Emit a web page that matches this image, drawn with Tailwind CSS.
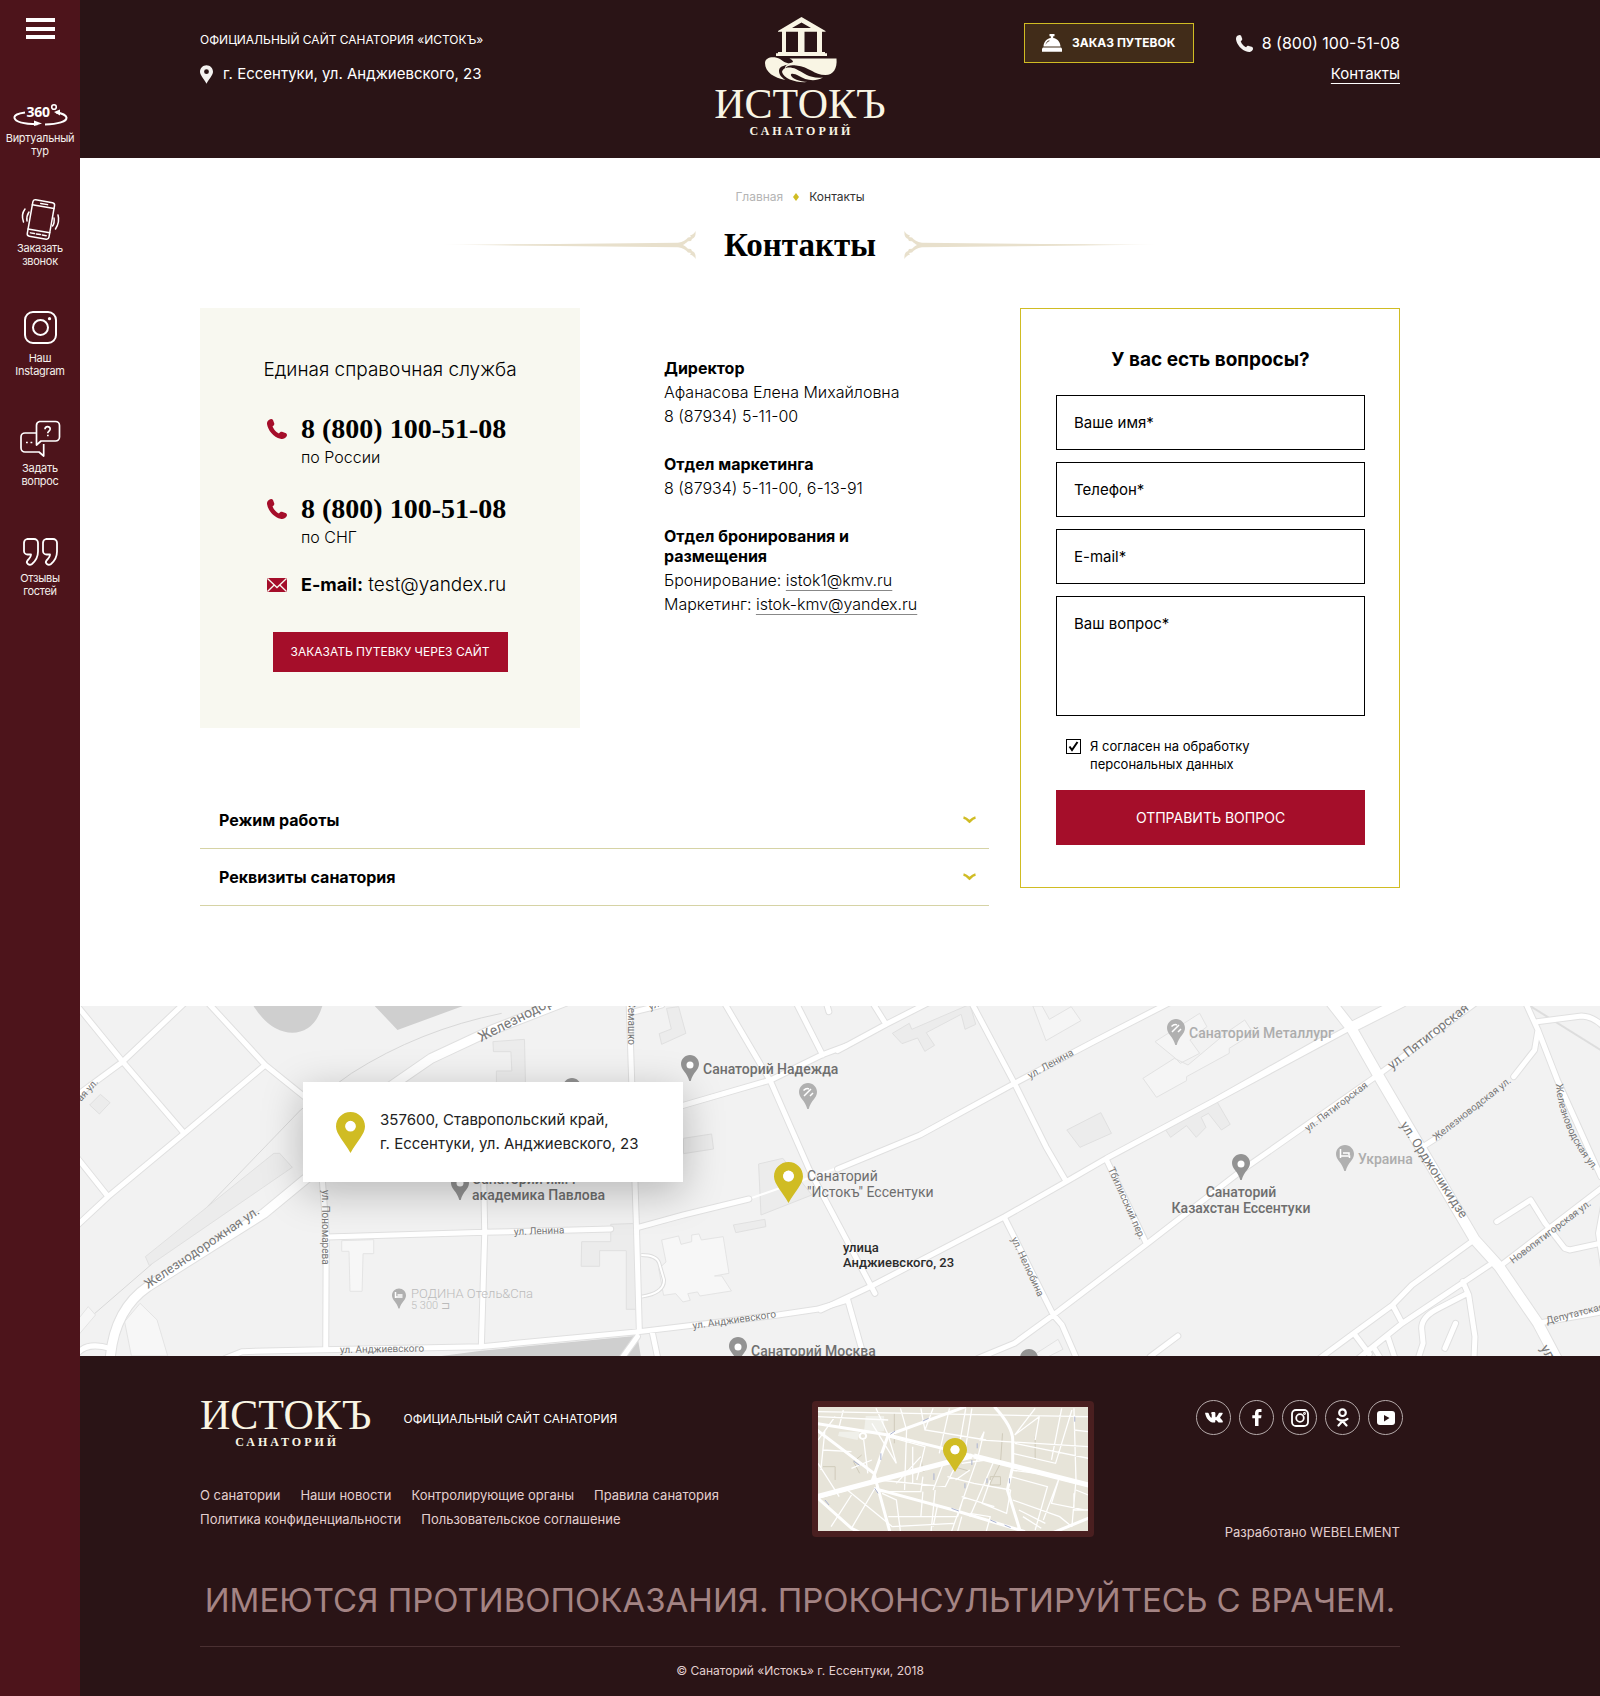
<!DOCTYPE html>
<html lang="ru">
<head>
<meta charset="utf-8">
<meta name="viewport" content="width=device-width, initial-scale=1">
<title>Контакты — Санаторий «Истокъ»</title>
<script src="https://cdn.jsdelivr.net/npm/@tailwindcss/browser@4"></script>
</head>
<body class="bg-white font-['Inter','Liberation_Sans',sans-serif] text-black">
<svg class="absolute size-0" aria-hidden="true">
  <defs>
    <symbol id="pin" viewBox="0 0 29 41"><path fill="currentColor" fill-rule="evenodd" d="M14.5 0C6.5 0 0 6.4 0 14.4 0 22 8 29 14.5 41 21 29 29 22 29 14.4 29 6.4 22.5 0 14.500 0zm0 8.800a5.400 5.400 0 1 1 0 10.800 5.400 5.400 0 0 1 0-10.800z"/></symbol>
    <symbol id="phone" viewBox="0 0 20 20"><path fill="currentColor" d="M2.200.7C3.600-.2 5.300-.2 6 1l1.200 3.200c.4 1.200-.2 2-1.500 2.900C5.400 8.500 8.500 13 11.900 14.400c1.200-1.600 2.100-1.900 3.100-1.600l3.400 1.100c1.700.6 2 2.400 1.100 3.700-1.300 2.100-3.600 2.700-6 2.200C6.400 18.200.8 11 0 5 -.1 3.200.6 1.600 2.200.7z"/></symbol>
    <symbol id="mappin" viewBox="0 0 18 26"><path fill="currentColor" d="M9 0C4 0 0 4 0 9c0 6 6 8 8.300 17h1.400C12 17 18 15 18 9c0-5-4-9-9-9z"/></symbol>
    <symbol id="chevron" viewBox="0 0 13 8"><path d="M.5 1.500C3 2 5 4 6.500 5.500 8 4 10 2 12.500 1.500" fill="none" stroke="currentColor" stroke-width="2.600"/></symbol>
    <linearGradient id="fade" gradientUnits="userSpaceOnUse" x1="0" y1="0" x2="258" y2="0"><stop offset="0" stop-color="#e8e0cc" stop-opacity="0"/><stop offset=".3" stop-color="#e8e0cc"/></linearGradient>
    <symbol id="flourish" viewBox="0 0 258 28"><path fill="url(#fade)" d="M0 13.600 120 13 240 11.800C245 11 248 9 250 6.500l3-.5-1-1.500C255 3.500 256.500 2 257.500 0 258 4 257 7 254 8l-1 2-3 .3C248 12 247 13 245 14c2 1 3 2 5 3.700l3 .3 1 2c3 1 4 4 3.500 8-1-2-2.500-3.500-5.500-4.500l1-1.500-3-.5C248 19 245 17 240 16.200L120 15z"/></symbol>
  </defs>
</svg>

<div class="flex min-h-screen">
  <aside class="flex w-20 shrink-0 flex-col items-center bg-[#4d141b] pt-[18px] text-[#f4f0ec]">
    <button type="button" aria-label="Меню" class="flex h-[21px] w-[29px] flex-col justify-between">
      <span class="h-1 w-full bg-white"></span><span class="h-1 w-full bg-white"></span><span class="h-1 w-full bg-white"></span>
    </button>
    <nav class="mt-[45px] flex flex-col text-center text-[11px] leading-[13px] tracking-tight">
      <a href="#" class="flex h-[110px] flex-col items-center">
        <svg class="h-12 w-20" viewBox="0 0 80 48" fill="none" stroke="#fff" stroke-width="2">
          <text x="26.500" y="33" font-family="Open Sans, sans-serif" font-size="14" font-weight="700" fill="#fff" stroke="none">360</text>
          <circle cx="54" cy="23" r="2.300" stroke-width="1.600"/>
          <path d="M25 28.500C18 29.500 14 31 14.500 34c1 4 11 6 23 6.200M45 40.500c13-.3 22-3 21.500-7C66 31 61 29 56 28.500"/>
          <path d="m34 36.500 8 3-8 2.500zM60 25.500l-6 2.500 6 3.500z" fill="#fff" stroke="none"/>
        </svg>
        <span>Виртуальный<br>тур</span>
      </a>
      <a href="#" class="flex h-[110px] flex-col items-center">
        <svg class="h-12 w-20" viewBox="0 0 80 48" fill="none" stroke="#fff" stroke-width="1.500" stroke-linecap="round">
          <g transform="rotate(10 41 25)"><rect x="30" y="7" width="22" height="37" rx="2.500"/><path d="M30 12.500h22M30 37h22M38 9.700h7M33 40.500h4M39 40.500h4M45 40.500h4"/></g>
          <path d="M25 15c-3 4-3 9-1.500 13M29 18c-2 3-2.500 6-2 9M58 21c1.500 5 0 10-2.500 14M54 24c.5 3 0 6-1.500 8"/>
        </svg>
        <span>Заказать<br>звонок</span>
      </a>
      <a href="#" class="flex h-[110px] flex-col items-center">
        <svg class="h-12 w-20" viewBox="0 0 80 48" fill="none" stroke="#fff" stroke-width="2">
          <rect x="25" y="8" width="31" height="31" rx="8"/><circle cx="40.500" cy="23.500" r="7.500"/><circle cx="49.500" cy="14.700" r="1.600" fill="#fff" stroke="none"/>
        </svg>
        <span>Наш<br>Instagram</span>
      </a>
      <a href="#" class="flex h-[110px] flex-col items-center">
        <svg class="h-12 w-20" viewBox="0 0 80 48" fill="none" stroke="#fff" stroke-width="1.700" stroke-linejoin="round">
          <path d="M39.500 7.500h16a4 4 0 0 1 4 4v11.500a4 4 0 0 1-4 4H41l-4.500 4V11.500a4 4 0 0 1 3-4zM36.500 19H25a4 4 0 0 0-4 4v11a4 4 0 0 0 4 4h14l4.700 4V30"/>
          <path d="M45 15.300c0-3.500 5.200-3.500 5.200-.2 0 2-2.500 2-2.500 4.200"/><path d="M47 21.500h1.700M26 28.500h1.800M30.500 28.500h1.800"/>
        </svg>
        <span>Задать<br>вопрос</span>
      </a>
      <a href="#" class="flex h-[110px] flex-col items-center">
        <svg class="h-12 w-20" viewBox="0 0 80 48" fill="none" stroke="#fff" stroke-width="1.800" stroke-linejoin="round">
          <path d="M27 15h7a4 4 0 0 1 4 4v8.500c0 6-2.500 9.500-6 12.500-3 2-6.500-1-4.500-3.500 2-2 3.500-4 3.500-6h-3.500a3.500 3.500 0 0 1-3.500-3.500v-8a4 4 0 0 1 3-4z"/>
          <path d="M46 15h7a4 4 0 0 1 4 4v8.500c0 6-2.500 9.500-6 12.500-3 2-6.500-1-4.500-3.500 2-2 3.500-4 3.500-6h-3.500a3.500 3.500 0 0 1-3.500-3.500v-8a4 4 0 0 1 3-4z"/>
        </svg>
        <span>Отзывы<br>гостей</span>
      </a>
    </nav>
  </aside>

  <div class="flex min-w-0 flex-1 flex-col">
    <header class="bg-[#2a1416] pr-20 text-white">
      <div class="mx-auto grid h-[158px] max-w-[1200px] grid-cols-[1fr_auto_1fr]">
        <div class="flex flex-col gap-[14px] pt-8">
          <p class="text-xs leading-4">ОФИЦИАЛЬНЫЙ САЙТ САНАТОРИЯ «ИСТОКЪ»</p>
          <p class="flex items-center gap-[10px] text-[15px] leading-6 text-white"><svg class="h-[19px] w-[13px] text-[#f4f2f0]"><use href="#pin"/></svg>г. Ессентуки, ул. Анджиевского, 23</p>
        </div>
        <a href="#" class="flex flex-col items-center pt-4 font-['Liberation_Serif',serif] text-[#f9f5e4]">
          <svg class="h-[68px] w-20" viewBox="0 0 80 68" fill="currentColor" aria-hidden="true">
            <path fill-rule="evenodd" d="M41.500 1 18 15v.8h4V36h-4v1.300h-2V40h51v-2.700h-2V36h-3V15.800h3.500V15zm0 5.500L51 12H32zM26 15.800h12V36H26zm18.500 0H57V36H44.500z"/>
            <path d="M5 47C5 41 14 39.500 20 43c3 2 5 4.500 11 4.500-5 2-11.500 2-12 7 0 4 2 6.500 6.500 9.500C14 62 5 56 5 47z"/>
            <path d="M29.500 42.500h47C77.500 53 73 59 65.500 59 54 59 50 51 36 49.500c-6-.7-9 .5-11 3C25 49 28 48 33 46c0-1.500-1.500-2.500-3.500-3.500z"/>
            <path d="M22 56c1-5 8-5.500 14-3 8 4 14 10 27 8.500-9 5-18 2-24-1.500-5-3-9-3-8-.5 1 3 8 6 17 6.500-12 1-24-3-26-10z"/>
          </svg>
          <span class="mt-1 text-[42px] leading-8">ИСТОКЪ</span>
          <span class="mt-[5px] pl-[3px] text-xs leading-3 font-bold tracking-[3px]">САНАТОРИЙ</span>
        </a>
        <div class="flex items-start justify-end gap-[42px]">
          <a href="#" class="mt-[23px] flex h-10 w-[170px] items-center justify-center gap-[10px] border border-[#d0bc23] bg-[#412c19] text-xs font-bold">
            <svg class="h-[18px] w-5" viewBox="0 0 20 18" fill="#fff" aria-hidden="true"><path fill-rule="evenodd" d="M7.500 0h5v2.200h-1.300V4c4.300.5 7 4 7.300 8.500H1.500C1.800 8 4.500 4.500 8.800 4V2.200H7.500zM7.200 6.200C5 7 3.700 9 3.600 11c.6-1.600 1.600-3.200 4-4z"/><path d="M1 13.500h18l1 1v3.300H0v-3.300z"/></svg>
            ЗАКАЗ ПУТЕВОК
          </a>
          <div class="flex flex-col items-end gap-[7px] pt-[31px]">
            <a href="#" class="flex items-center gap-[9px] text-base leading-6"><svg class="size-[17px] text-[#f4f2f0]"><use href="#phone"/></svg>8 (800) 100-51-08</a>
            <a href="#" class="text-[15px] leading-6 underline underline-offset-4">Контакты</a>
          </div>
        </div>
      </div>
    </header>

    <main class="pt-[31px]">
      <div class="pr-20">
        <nav class="flex items-center justify-center gap-[10px] text-xs leading-4">
          <a href="#" class="text-[#b4b4b4]">Главная</a>
          <svg class="h-2 w-[6px]" viewBox="0 0 6 8"><path fill="#d0bc23" d="m3 0 3 4-3 4-3-4z"/></svg>
          <span class="text-[#333]">Контакты</span>
        </nav>
        <div class="mt-5 flex items-center justify-center gap-7">
          <svg class="h-7 w-[258px]"><use href="#flourish"/></svg>
          <h1 class="font-['Liberation_Serif',serif] text-[33px] leading-10 font-bold">Контакты</h1>
          <svg class="h-7 w-[258px] -scale-x-100"><use href="#flourish"/></svg>
        </div>

        <div class="mx-auto mt-[43px] grid max-w-[1200px] grid-cols-[1fr_380px] items-start gap-[31px]">
          <div>
            <div class="flex gap-[84px]">
              <section class="h-[420px] w-[380px] shrink-0 bg-[#f8f8f0] pt-[50px]">
                <h2 class="text-center text-[19px] leading-6 font-light">Единая справочная служба</h2>
                <div class="mt-[31px] flex flex-col gap-6 pl-[67px]">
                  <div class="flex gap-[14px]"><svg class="mt-[6px] size-5 text-[#a50e2a]"><use href="#phone"/></svg>
                    <div><a href="#" class="block font-['Liberation_Serif',serif] text-[28px] leading-8 font-bold">8 (800) 100-51-08</a><p class="text-[16px] leading-6 font-light">по России</p></div></div>
                  <div class="flex gap-[14px]"><svg class="mt-[6px] size-5 text-[#a50e2a]"><use href="#phone"/></svg>
                    <div><a href="#" class="block font-['Liberation_Serif',serif] text-[28px] leading-8 font-bold">8 (800) 100-51-08</a><p class="text-[16px] leading-6 font-light">по СНГ</p></div></div>
                  <div class="flex items-center gap-[14px]"><svg class="h-[14px] w-5" viewBox="0 0 20 14"><rect width="20" height="14" rx="1" fill="#a50e2a"/><path d="M.5.500 10 9.500 19.500.5M.5 13.500 7.200 7M19.500 13.500 12.800 7" fill="none" stroke="#f8f8f0" stroke-width="1.300"/></svg>
                    <p class="text-[19px] leading-6 font-light"><b class="text-[18px] font-bold">E-mail:</b> test@yandex.ru</p></div>
                </div>
                <button type="button" class="mx-auto mt-[35px] block h-10 w-[235px] bg-[#a50e2a] text-xs text-white">ЗАКАЗАТЬ ПУТЕВКУ ЧЕРЕЗ САЙТ</button>
              </section>
              <section class="flex flex-col gap-[26px] pt-[50px] text-[16px] leading-6 font-light">
                <div><h3 class="mb-[2px] leading-5 font-bold">Директор</h3><p>Афанасова Елена Михайловна</p><p>8 (87934) 5-11-00</p></div>
                <div><h3 class="mb-[2px] leading-5 font-bold">Отдел маркетинга</h3><p>8 (87934) 5-11-00, 6-13-91</p></div>
                <div><h3 class="mb-[2px] leading-5 font-bold">Отдел бронирования и<br>размещения</h3><p>Бронирование: <a href="#" class="underline decoration-[#888] underline-offset-4">istok1@kmv.ru</a></p><p>Маркетинг: <a href="#" class="underline decoration-[#888] underline-offset-4">istok-kmv@yandex.ru</a></p></div>
              </section>
            </div>
            <div class="mt-16">
              <button type="button" class="flex h-[57px] w-full items-center justify-between border-b border-[#d6d3a5] pr-[13px] pl-[19px] text-[16px] font-bold">Режим работы<svg class="h-2 w-[13px] text-[#d0bc23]"><use href="#chevron"/></svg></button>
              <button type="button" class="flex h-[57px] w-full items-center justify-between border-b border-[#d6d3a5] pr-[13px] pl-[19px] text-[16px] font-bold">Реквизиты санатория<svg class="h-2 w-[13px] text-[#d0bc23]"><use href="#chevron"/></svg></button>
            </div>
          </div>

          <form class="flex flex-col border border-[#d0bc23] pt-[39px] pr-[34px] pb-[42px] pl-[35px]">
            <h2 class="text-center text-[19px] leading-6 font-bold">У вас есть вопросы?</h2>
            <div class="mt-[23px] flex flex-col gap-3 text-[15px]">
              <input type="text" aria-label="Ваше имя" placeholder="Ваше имя*" class="h-[55px] border border-black px-[17px] placeholder:text-black">
              <input type="tel" aria-label="Телефон" placeholder="Телефон*" class="h-[55px] border border-black px-[17px] placeholder:text-black">
              <input type="email" aria-label="E-mail" placeholder="E-mail*" class="h-[55px] border border-black px-[17px] placeholder:text-black">
              <textarea aria-label="Ваш вопрос" placeholder="Ваш вопрос*" class="h-[120px] resize-none border border-black px-[17px] py-[15px] leading-6 placeholder:text-black"></textarea>
            </div>
            <label class="mt-[21px] flex gap-[9px] pl-[10px] text-[13px] leading-[18px]">
              <span class="relative mt-[2px] size-[15px] shrink-0"><input type="checkbox" checked class="block size-[15px] appearance-none border border-black"><svg class="pointer-events-none absolute inset-0 size-[15px]" viewBox="0 0 15 15"><path d="m3.500 7.500 2.500 3.500L11.500 3" fill="none" stroke="#000" stroke-width="2"/></svg></span>
              <span>Я согласен на обработку<br>персональных данных</span>
            </label>
            <button type="submit" class="mt-[17px] h-[55px] bg-[#a50e2a] text-[14px] text-white">ОТПРАВИТЬ ВОПРОС</button>
          </form>
        </div>
      </div>

      <section class="relative mt-[100px] h-[350px] overflow-hidden bg-[#f2f2f2]">
        <svg class="h-full w-full" viewBox="0 0 1520 350" preserveAspectRatio="xMinYMin slice" font-family="Roboto, sans-serif">
          <defs>
            <path id="roads-w" d="M215 10 88 185-10 290M-10 10 88 185 215 400M265 10 382 195 480 310M382 195 215 400 58 590-5 675M-5 475 58 590M500 540 508 700 507 1048M833 540 835 700 828 1040M1133 10 1148 680 1154 995M510 711 835 697 1095 687M1150 683 1245 645 1380 597M300 1075 335 1055 500 1049 828 1040 1154 995 1440 945 1520 928 1580 902M1180 992 1192 1075M1330 10 1425 245 1505 510 1640 880M1240 318 1425 240 1530 165 1580 138M1478 10 1532 165M1145 35 1200 15M-5 1060Q15 1025 62 1045M1150 1010 1118 1075M1540 10 1545 35"/>
            <path id="roads-e" d="M-5 152 95 73 180 10M68 10 95 73M272 10 360 250 425 440 467 545M-5 507 165 405 360 250 530 120 680 8M-40 930 65 858 340 650 467 545 550 475 775 300 1050 85M285 1075 360 1030 440 945 630 735 830 510 1110 225 1310 10M550 480 632 730M340 655 440 945 458 975 488 1075M15 895 50 1075M1355 665 1425 600 1455 670 1495 745 1505 750 1575 728M1360 800 1450 700 1580 555M1310 718 1180 855 1140 915 1060 1000 990 1075M1340 795 1160 970 1070 1075M1140 915 1160 970M1060 1000 1092 1062M1285 845 1297 885 1310 1010 1308 1075M1295 880 1235 925Q1200 950 1200 985L1203 1030 1193 1075M1130 1010 1145 1075M1100 1040 1115 1075M1440 970 1575 935M1415 10 1440 90 1480 240 1570 530M1438 65 1530 48Q1555 50 1575 80M1440 90 1433 150 1390 230M1235 410 1203 440M1575 620 1565 700 1575 800M640 1070 697 1008M1270 970 1248 1045M1000 115 775 300"/>
            <path id="wide-w" d="M1000 5 850 90 725 175 640 260 480 520 380 640 140 860Q70 930 62 1080"/>
            <path id="wide-e" d="M1012 5 1055 85 1110 225 1310 720 1360 800 1440 970 1480 1080M1055 82 1160 5"/>
          </defs>
          <g transform="translate(0 -6) scale(.4847 .3333)">
            <g fill="#cfcfcf"><path d="M358 18q35 80 80 80t62-80zM608 18l47 72L790 18zM828 1052l322-45 8 70H700z"/></g>
            <path d="M-5 985 150 790 455 330 560 220Q700 90 870 40" fill="none" stroke="#d8d8d8" stroke-width="1" vector-effect="non-scaling-stroke"/>
            <g fill="#ececec" stroke="#e0e0e0" stroke-width="1"><path vector-effect="non-scaling-stroke" d="M852 125l65-7 2 130h-60v-35h32l-2-58h-36zM1210 25l25-5 15 80-50 33-5-32 25-14zM20 315l22-32 20 25-22 34zM135 770l265-310 12 0 26 42-295 295zM1035 725h60v-52l58-3 2 258h-28V752h-55v47h-38zM1245 415l58-13 4 45-62 14zM1348 675l65-17 2 22-62 18zM1400 492l50-17 60 110-105 60z"/></g>
            <g fill="#f7f7f7" stroke="#e4e4e4"><path vector-effect="non-scaling-stroke" d="M540 722l66-3v42h-22l-2 113h-25l-2-120h-15zM92 965l32-55 35 50 22 108h-75zM-5 960l22-40 15 25-35 60zM1200 720l35-12 5 25 22-8v-20l15-3 5 18 45-10 12 110-30 8 15 0 20 45-65 15-5-12-20 5 5 20-15 5-15-25-25 5-10-80 15-20z"/></g>
            <path d="M1158 765Q1190 765 1195 790L1205 840Q1205 880 1158 890" fill="none" stroke="#ddd" stroke-width="4" vector-effect="non-scaling-stroke"/><path d="M1158 765Q1190 765 1195 790L1205 840Q1205 880 1158 890M1380 597 1580 495" fill="none" stroke="#fff" stroke-width="2" vector-effect="non-scaling-stroke"/>
          </g>
          <g transform="translate(760 -6) scale(.4847 .3333)">
            <g fill="#ececec" stroke="#e0e0e0"><path vector-effect="non-scaling-stroke" d="M108 100l35-30 5 18 120-75 12 60-22 15-8-45-72 55 17 38-20 18-15-40-32 17zM468 390l70-52 22 62-65 42zM672 390l103-92 30 75-18 17-27-50-15 12 10 30-20 30-20-35-33 35z"/></g>
            <g fill="#f5f5f5" stroke="#e2e2e2"><path vector-effect="non-scaling-stroke" d="M398 18l27 104 72-60-20-42-45 38-15-40zM650 125l92-85 15 40-35 40 20 40-40 30-10-15zM625 235l65-60 28 20 82-100 35-35 18 40-50 45 0 15-88 70 0 12-62 50zM405 1060l45-42 10 30-30 22"/></g>
            <path d="M1415 10 1580 160" stroke="#ddd" stroke-width="2" vector-effect="non-scaling-stroke"/>
          </g>
          <g id="road-layers" fill="none" stroke-linejoin="round" stroke-linecap="round"></g>
          <g fill="#777" font-size="10">
            <g font-size="14">
              <text transform="translate(401 36) rotate(-27)">Железнодорожная ул.</text>
              <text transform="translate(68 283) rotate(-34)" font-size="13">Железнодорожная ул.</text>
              <text transform="translate(1312 64) rotate(-38)" font-size="13">ул. Пятигорская</text>
              <text transform="translate(1320 119) rotate(57)" font-size="13">ул. Орджоникидзе</text>
              <text transform="translate(1460 342) rotate(60)">ул.</text>
            </g>
            <text transform="translate(242 184) rotate(90)">ул. Пономарева</text>
            <text transform="translate(548 39) rotate(90)" text-anchor="end">ул. Семашко</text>
            <text transform="translate(1 96) rotate(-48)">ая ул.</text>
            <text transform="translate(570 4) rotate(-20)">ул.</text>
            <text transform="translate(434 229) rotate(-2)">ул. Ленина</text>
            <text transform="translate(260 347) rotate(-1)">ул. Анджиевского</text>
            <text transform="translate(613 323) rotate(-8)">ул. Анджиевского</text>
            <text transform="translate(950 73) rotate(-29)">ул. Ленина</text>
            <text transform="translate(1228 126) rotate(-37)">ул. Пятигорская</text>
            <text transform="translate(1356 135) rotate(-38)">Железноводская ул.</text>
            <path id="zhelez" d="M1476 78Q1479 125 1518 170" fill="none"/>
            <text><textPath href="#zhelez">Железноводская ул.</textPath></text>
            <text transform="translate(1028 163) rotate(66)">Тбилисский пер.</text>
            <text transform="translate(931 233) rotate(65)">ул. Нелюбина</text>
            <text transform="translate(1433 258) rotate(-37)">Новопятигорская ул.</text>
            <text transform="translate(1467 318) rotate(-14)">Депутатская ул.</text>
          </g>
          <g font-size="14" font-weight="500" fill="#6e6e6e">
            <text x="623" y="68">Санаторий Надежда</text>
            <text x="392" y="178">Санаторий им. г</text>
            <text x="392" y="194">академика Павлова</text>
            <text x="671" y="350">Санаторий Москва</text>
            <text x="1161" y="191" text-anchor="middle">Санаторий</text>
            <text x="1161" y="207" text-anchor="middle">Казахстан Ессентуки</text>
            <g font-weight="400"><text x="727" y="175">Санаторий</text><text x="727" y="191">"Истокъ" Ессентуки</text></g>
            <g fill="#adadad"><text x="1109" y="32">Санаторий Металлург</text><text x="1278" y="158">Украина</text></g>
            <g fill="#bbb" font-weight="300" font-size="13"><text x="331" y="292">РОДИНА Отель&amp;Спа</text><text x="331" y="303" font-size="11">5 300 ⊐</text></g>
            <g fill="#2b2b2b" font-size="13"><text x="763" y="246">улица</text><text x="763" y="261">Анджиевского, 23</text></g>
          </g>
          <g color="#939393">
            <use href="#mappin" x="601" y="49" width="18" height="26"/><use href="#mappin" x="483" y="72" width="18" height="26"/><use href="#mappin" x="371" y="168" width="18" height="26"/><use href="#mappin" x="649" y="331" width="18" height="26"/><use href="#mappin" x="940" y="343" width="18" height="26"/><use href="#mappin" x="1152" y="148" width="18" height="26"/>
            <g fill="#fff"><circle cx="610" cy="59" r="3.500"/><circle cx="380" cy="177" r="3.500"/><circle cx="658" cy="341" r="3.500"/><circle cx="1161" cy="158" r="3.500"/></g>
          </g>
          <g color="#b0b0b0">
            <use href="#mappin" x="719" y="77" width="18" height="26"/><use href="#mappin" x="1087" y="13" width="18" height="26"/><use href="#mappin" x="1256" y="139" width="18" height="26"/><use href="#mappin" x="312" y="282" width="14" height="21"/>
            <g stroke="#fff" stroke-width="1.500" fill="none"><path d="m724 90 7-7M723.500 84.500q3-3 5.500-1.500M730 90l3-3M1092 26l7-7M1091.500 20.500q3-3 5.500-1.500M1098 26l3-3M1260.500 143v9M1260.500 150h9v2M1263 147h6v2M315.500 286v6M315.500 291h7M317.500 289h5"/></g>
          </g>
          <use href="#pin" x="694" y="156" width="29" height="41" color="#d0bc23"/><circle cx="708.500" cy="170" r="5.400" fill="#fff"/>
        </svg>
        <div class="absolute top-[76px] left-[223px] flex h-[100px] w-[380px] items-center gap-[15px] bg-white pl-[33px] shadow-[0_10px_40px_rgba(0,0,0,0.25)]">
          <svg class="h-[41px] w-[29px] shrink-0 text-[#d0bc23]"><use href="#pin"/></svg>
          <p class="text-[15px] leading-6 text-[#222]">357600, Ставропольский край,<br>г. Ессентуки, ул. Анджиевского, 23</p>
        </div>
      </section>
    </main>

    <footer class="flex-1 bg-[#2a1416] pt-[43px] pr-20 pb-[15px] text-[#e3cfcf]">
      <div class="mx-auto max-w-[1200px]">
        <div class="grid min-h-[143px] grid-cols-[612px_282px_1fr]">
          <div>
            <div class="flex gap-8">
              <a href="#" class="flex flex-col items-center font-['Liberation_Serif',serif] text-[#f9f5e4]">
                <span class="text-[42px] leading-8">ИСТОКЪ</span>
                <span class="mt-[5px] pl-[3px] text-xs leading-3 font-bold tracking-[3px]">САНАТОРИЙ</span>
              </a>
              <p class="pt-3 text-xs leading-4 text-white">ОФИЦИАЛЬНЫЙ САЙТ САНАТОРИЯ</p>
            </div>
            <nav class="mt-[35px] flex flex-wrap gap-x-5 text-[13px] leading-6">
              <a href="#">О санатории</a><a href="#">Наши новости</a><a href="#">Контролирующие органы</a><a href="#">Правила санатория</a><a href="#">Политика конфиденциальности</a><a href="#">Пользовательское соглашение</a>
            </nav>
          </div>
          <a href="#" aria-label="Карта" class="mt-[2px] block h-[136px] rounded-[4px] bg-[#4a1f20] p-[6px]">
            <svg class="h-full w-full bg-[#e7e4d9]" viewBox="0 0 270 124" preserveAspectRatio="xMidYMid slice" fill="none">
              <g transform="translate(-27.760 -27) scale(.4082 .3333)" stroke="#fff">
                <path fill="#f0f0ea" stroke="none" d="M185 108h45v45l-50 10zM120 155h50l-5 25-48-12z"/>
                <g stroke-width="1" stroke="#d0cbbb"><path vector-effect="non-scaling-stroke" d="M255 100v90M175 225l-20 20 15 35M80 260h30v40M320 230l5 45 30-20M520 160l-5 90-25 60M490 290h25v25h-25zM400 260l35 12M600 170v70"/></g>
                <g stroke-width="1.300"><path vector-effect="non-scaling-stroke" d="M68 95 730 110M68 110 240 120M270 85 285 150 280 330M320 85 330 150 480 180M330 150 350 85M390 85 365 220M430 85 405 260M445 85 430 200M475 155 465 180 730 200M475 155 460 230 395 455M550 165 610 110 600 180M550 165 600 85M550 190 730 235M545 220 650 250 690 90M665 85 640 240M695 85 700 300 690 440M695 150 730 155M85 150 75 270M80 210 150 215M68 180 110 110M130 90 120 140M210 85 240 165 260 250 200 130M240 170 330 200 310 300M215 300 380 320 400 270M355 330 345 455M375 250 350 330M385 290 450 310 540 330M405 300 440 270M220 335 320 335 325 290M325 335 320 410M240 410 410 410M270 455 260 360 225 340M140 330 250 440M150 345 100 440M205 330 150 445M180 180 190 280M500 240 440 410M490 300 470 370 530 400 540 330M540 290 630 320 600 450M540 270 660 290 620 420M545 360 660 410 690 440M560 390 625 430M570 410 615 445M660 290 640 370 720 390M700 330 730 345M695 340V390H730M420 350 500 380M420 370 410 410M360 380 350 440M420 250 480 240M250 440 400 430M300 310 300 200M150 265 200 240M68 250 120 350M320 230 260 310M480 455 490 410 440 400M410 455 420 410"/></g>
                <g stroke-width="3"><path vector-effect="non-scaling-stroke" d="M60 130 240 165 455 230 740 320M60 145 205 280 245 460M430 80 240 165 200 305M500 80Q545 140 545 180V260L532 330 565 460M60 355 205 305 440 230M205 325 400 390 575 455M640 460 740 410M68 355 150 445 175 460"/></g>
                <g stroke-width="5"><path vector-effect="non-scaling-stroke" d="M450 228 740 318M60 352 210 303 445 228"/></g>
                <ellipse cx="178" cy="168" rx="8" ry="9" stroke-width="2" vector-effect="non-scaling-stroke"/>
                <path stroke="#aab2d0" stroke-width="1" vector-effect="non-scaling-stroke" d="M155 243l15 13M245 163l12-10M325 123l14-8M222 220v20M207 325l8 15M352 280v20M395 385l18 8M428 310v15M445 240v15M458 190v15M482 295v15M490 420l15 8M525 435l15 8M537 295v15M697 110v15M85 360l10 15"/>
              </g>
              <use href="#pin" x="125" y="31" width="24" height="34" color="#d0bc23"/><circle cx="137" cy="42.700" r="4.500" fill="#fff"/>
            </svg>
          </a>
          <div class="flex flex-col items-end justify-between pt-px">
            <div class="-mr-[3px] flex gap-2 text-white">
              <a href="#" aria-label="ВКонтакте" class="grid size-[35px] place-items-center rounded-full border border-[#b5aaaa]"><svg class="h-[11px] w-[18px]" viewBox="0 0 18 11" fill="currentColor"><path d="M0 .7h2.900c.4 0 .6.300.7.600.6 1.700 1.500 3.400 2.300 4.200.4.400.8.300.8-.4V2.500c0-.9-.6-1-.9-1.200C6.200.3 7 0 8.200 0c1.700 0 2.200.3 2.200 1.300v3.200c0 .9.500.9 1 .4.900-.9 1.700-2.400 2.200-3.500.2-.5.400-.7.900-.7h2.700c.5 0 .7.300.5.800-.6 1.500-2.600 3.700-2.600 4.100 0 .6 2.400 2.400 2.800 4.200.1.500-.2.800-.7.800h-2.800c-.7 0-1-.3-1.500-.9-.6-.8-1.700-1.800-2.100-1.800-.5 0-.4.500-.5 1.500-.1.900-.4 1.200-1.300 1.200C4.500 10.600 1 6.500 0 .7z"/></svg></a>
              <a href="#" aria-label="Facebook" class="grid size-[35px] place-items-center rounded-full border border-[#b5aaaa]"><svg class="h-[17px] w-[10px]" viewBox="0 0 10 17" fill="currentColor"><path d="M3 17V9.300H.3V6.200H3V4.300C3 1.500 4.500 0 7.200 0h2.300v3H8C6.700 3 6.500 3.500 6.500 4.400v1.800h3l-.4 3.100H6.500V17z"/></svg></a>
              <a href="#" aria-label="Instagram" class="grid size-[35px] place-items-center rounded-full border border-[#b5aaaa]"><svg class="size-[18px]" viewBox="0 0 18 18" fill="none" stroke="currentColor" stroke-width="1.800"><rect x="1" y="1" width="16" height="16" rx="4"/><circle cx="9" cy="9" r="3.800"/><circle cx="13.500" cy="4.500" r=".5"/></svg></a>
              <a href="#" aria-label="Одноклассники" class="grid size-[35px] place-items-center rounded-full border border-[#b5aaaa]"><svg class="h-[19px] w-[13px]" viewBox="0 0 13 19" fill="none" stroke="currentColor" stroke-width="2.200" stroke-linecap="round"><circle cx="6.500" cy="4.700" r="3.300"/><path d="M1.500 10.800c3 2.300 7 2.300 10 0M6.500 13 2.500 17.500M6.500 13l4 4.500"/></svg></a>
              <a href="#" aria-label="YouTube" class="grid size-[35px] place-items-center rounded-full border border-[#b5aaaa]"><svg class="h-[14px] w-[18px]" viewBox="0 0 18 14"><rect width="18" height="14" rx="3" fill="currentColor"/><path d="M7 4v6.500L12.500 7z" fill="#2a1416"/></svg></a>
            </div>
            <a href="#" class="text-[13px] leading-5">Разработано WEBELEMENT</a>
          </div>
        </div>
        <p class="mt-[38px] text-center text-[33px] leading-10 whitespace-nowrap text-[#a48484]">ИМЕЮТСЯ ПРОТИВОПОКАЗАНИЯ. ПРОКОНСУЛЬТИРУЙТЕСЬ С ВРАЧЕМ.</p>
        <div class="mt-[26px] border-t border-[#4a3032] pt-[14px] text-center text-xs leading-5">© Санаторий «Истокъ» г. Ессентуки, 2018</div>
      </div>
    </footer>
  </div>
</div>
<script>
// Each road is drawn twice: a grey casing first, then the white surface on top.
const layer = document.getElementById('road-layers');
const roads = [['roads-w', 0, 5], ['roads-e', 760, 5], ['wide-w', 0, 9], ['wide-e', 760, 10]];
for (const [colour, extra] of [['#e0e0e0', 2], ['#fff', 0]]) {
  for (const [id, x, width] of roads) {
    const p = document.createElementNS('http://www.w3.org/2000/svg', 'path');
    p.setAttribute('d', document.getElementById(id).getAttribute('d'));
    p.setAttribute('transform', `translate(${x} -6) scale(.4847 .3333)`);
    p.setAttribute('stroke', colour);
    p.setAttribute('stroke-width', width + extra);
    p.setAttribute('vector-effect', 'non-scaling-stroke');
    layer.append(p);
  }
}
</script>
</body>
</html>
